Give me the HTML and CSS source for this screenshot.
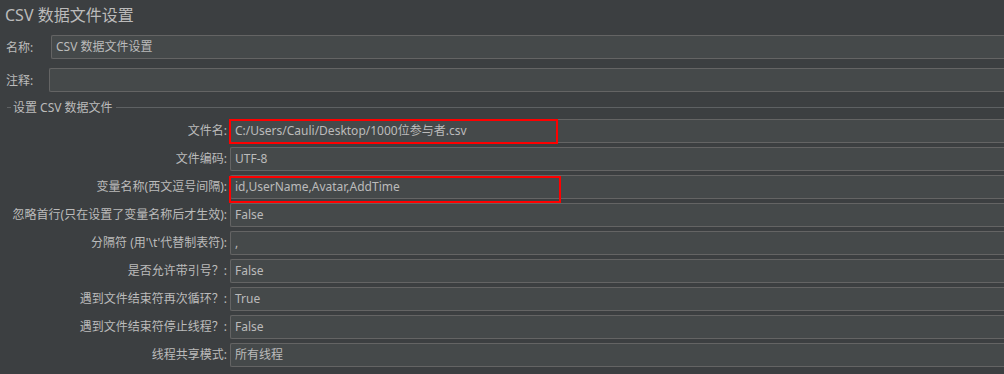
FILE: index.html
```html
<!DOCTYPE html>
<html lang="zh-CN">
<head>
    <meta charset="UTF-8">
    <title>CSV 数据文件设置</title>
    <link rel="stylesheet" href="styles.css">
</head>
<body>
    <h1 class="title">CSV 数据文件设置</h1>

    <div class="top-row">
        <label class="top-label">名称:</label>
        <div class="field">CSV 数据文件设置</div>
    </div>
    <div class="top-row top-row-comment">
        <label class="top-label">注释:</label>
        <div class="field"></div>
    </div>

    <section class="group">
        <div class="group-title"><span>设置 CSV 数据文件</span></div>
        <div class="grid">
            <label>文件名:</label>
            <div class="field">C:/Users/Cauli/Desktop/1000位参与者.csv<span class="mark mark-file"></span></div>

            <label>文件编码:</label>
            <div class="field">UTF-8</div>

            <label>变量名称(西文逗号间隔):</label>
            <div class="field">id,UserName,Avatar,AddTime<span class="mark mark-vars"></span></div>

            <label>忽略首行(只在设置了变量名称后才生效):</label>
            <div class="field">False</div>

            <label>分隔符 (用'\t'代替制表符):</label>
            <div class="field">,</div>

            <label>是否允许带引号？:</label>
            <div class="field">False</div>

            <label>遇到文件结束符再次循环？:</label>
            <div class="field">True</div>

            <label>遇到文件结束符停止线程？:</label>
            <div class="field">False</div>

            <label>线程共享模式:</label>
            <div class="field">所有线程</div>
        </div>
    </section>
</body>
</html>
```

FILE: styles.css
```css
body {
    margin: 0;
    padding: 0;
    background-color: #3c3f41;
    color: #bbbbbb;
    font-family: "Noto Sans", "Noto Sans CJK SC", sans-serif;
    font-size: 12px;
    overflow: hidden;
}
.title {
    margin: 0;
    padding-left: 5px;
    height: 35px;
    line-height: 31px;
    font-size: 16px;
    font-weight: normal;
}
.top-row {
    display: flex;
    align-items: center;
    margin-right: -8px;
    margin-bottom: 9px;
}
.top-label {
    width: 51px;
    padding-left: 6px;
    box-sizing: border-box;
    flex: none;
}
.top-row-comment .top-label {
    width: 49px;
}
.field {
    position: relative;
    flex: 1;
    height: 24px;
    line-height: 22px;
    padding-left: 4px;
    background-color: #45494a;
    border: 1px solid #646464;
    border-right: none;
    border-radius: 2px 0 0 2px;
    box-sizing: border-box;
    white-space: nowrap;
}
.group {
    margin-top: 5px;
}
.group-title {
    display: flex;
    align-items: center;
    height: 12px;
    padding-left: 7px;
}
.group-title::before {
    content: "";
    width: 4px;
    border-top: 1px solid #5e6163;
}
.group-title::after {
    content: "";
    flex: 1;
    border-top: 1px solid #5e6163;
}
.group-title span {
    padding: 0 3px 0 2px;
}
.grid {
    display: grid;
    grid-template-columns: 227px 1fr;
    grid-auto-rows: 24px;
    column-gap: 3px;
    row-gap: 4px;
    margin-top: 6px;
    margin-right: -8px;
}
.grid label {
    text-align: right;
    line-height: 24px;
    white-space: nowrap;
}
.mark {
    position: absolute;
    top: -1px;
    left: -2px;
    border: 2px solid #ff0000;
    box-sizing: border-box;
}
.mark-file {
    width: 329px;
    height: 25px;
}
.mark-vars {
    top: 0;
    width: 332px;
    height: 27px;
}
```
